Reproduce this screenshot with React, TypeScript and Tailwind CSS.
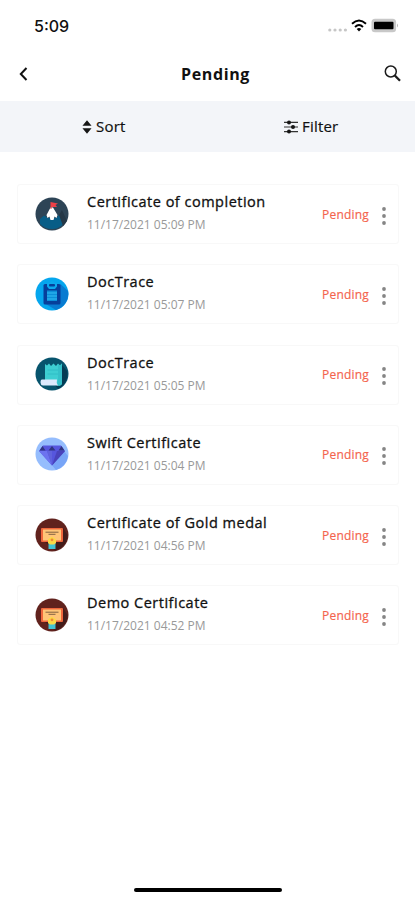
import React from 'react';

type BadgeKind = 'summit' | 'clipboard' | 'scroll' | 'diamond' | 'diploma';

interface Certificate {
  id: number;
  title: string;
  date: string;
  badge: BadgeKind;
}

const CERTIFICATES: Certificate[] = [
  { id: 1, title: 'Certificate of completion', date: '11/17/2021 05:09 PM', badge: 'summit' },
  { id: 2, title: 'DocTrace', date: '11/17/2021 05:07 PM', badge: 'clipboard' },
  { id: 3, title: 'DocTrace', date: '11/17/2021 05:05 PM', badge: 'scroll' },
  { id: 4, title: 'Swift Certificate', date: '11/17/2021 05:04 PM', badge: 'diamond' },
  { id: 5, title: 'Certificate of Gold medal', date: '11/17/2021 04:56 PM', badge: 'diploma' },
  { id: 6, title: 'Demo Certificate', date: '11/17/2021 04:52 PM', badge: 'diploma' },
];

const Badge: React.FC<{ kind: BadgeKind }> = ({ kind }) => (
  <svg width="34" height="34" viewBox="0 0 34 34" className="shrink-0 -mt-px">
    {kind === 'summit' && (
      <>
        <circle cx="17" cy="17" r="16.5" fill="#2d4456" />
        <path d="M5 27L5 22L9 18.5L13 21H21L24 18L30 25A16 16 0 0 1 5 27Z" fill="#075d87" />
        <path d="M11.5 18L15.5 10.5H18L22.5 18L21.5 21L19.5 19.5L18.5 23H15.5L14.5 19.5L12.5 21Z" fill="#fff" />
        <path d="M24 18L27 13L32 24L28 29Z" fill="#243746" />
        <path d="M15.5 5L23 6.5L20.5 8L22 10H16.5V12H15.5Z" fill="#ef4047" />
      </>
    )}
    {kind === 'clipboard' && (
      <>
        <circle cx="17" cy="17" r="16.5" fill="#05a6ee" />
        <path d="M25.5 7L33 14A16.5 16.5 0 0 1 21 33L9 26Z" fill="#087bd1" />
        <rect x="8.5" y="7" width="17" height="20.5" rx="1.5" fill="#063f9b" />
        <path d="M12 6H14.5L15.5 4.5H18.5L19.5 6H22V9.5L20 12H14L12 9.5Z" fill="#0ca9ed" />
        <rect x="14" y="7" width="6" height="2.5" rx="1" fill="#063f9b" />
        <rect x="12" y="13.5" width="10" height="10.5" fill="#0b8fd9" />
        <path d="M12 16H22M12 19H22M12 22H22" stroke="#34bdf4" strokeWidth="1.1" />
      </>
    )}
    {kind === 'scroll' && (
      <>
        <circle cx="17" cy="17" r="16.5" fill="#07546d" />
        <path d="M27 8L32 14A16 16 0 0 1 23 32L19 27Z" fill="#043c54" />
        <path d="M10 7L12 8.5L14 6.5L16 9L18.5 6.5L21 9L23 6.5L25 8.5L27 6.5V27Q25 30 21 28H10Z" fill="#3dced2" />
        <path d="M23 8L25 8.5L27 6.5V27Q25 30 22 28L23 23Z" fill="#34c0c9" />
        <path d="M12.5 13H23M12.5 17H23" stroke="#2fbac3" strokeWidth=".8" />
        <path d="M7 22.5H22Q21 26 23 28.5H8Q5.5 28 5.5 25.5Q5.5 22.5 7 22.5Z" fill="#dceafd" />
      </>
    )}
    {kind === 'diamond' && (
      <>
        <circle cx="17" cy="17" r="16.5" fill="#95bdfd" />
        <path d="M29 14L33 19A16.5 16.5 0 0 1 21 33L16 27Z" fill="#78a5f7" />
        <path d="M8 8.5H26L30 14L17 28.5L4 14Z" fill="#5656dd" />
        <path d="M4 14H12L17 28.5Z" fill="#6c73ef" />
        <path d="M22 14H30L17 28.5Z" fill="#4943bb" />
        <path d="M12 14H17V28.5Z" fill="#6063dd" />
        <path d="M4.5 13.5L7.5 9L10.5 13.5ZM13.5 13.5L17 9L20.5 13.5ZM23.5 13.5L26.5 9L29.5 13.5Z" fill="#313681" />
      </>
    )}
    {kind === 'diploma' && (
      <>
        <circle cx="17" cy="17" r="16.5" fill="#61221d" />
        <path d="M28 10L32.5 17A16 16 0 0 1 20 32.5L10 24Z" fill="#431c1b" />
        <rect x="6" y="10" width="22" height="14" rx="1" fill="#ef663c" />
        <rect x="8" y="11.5" width="18" height="11" fill="#ffc578" />
        <path d="M10.5 14.2H23.5M13.5 16.3H20.5" stroke="#74563b" strokeWidth=".9" />
        <path d="M13.5 25H20.5V31H13.5Z" fill="#43c3d2" />
        <path d="M17 18.5L21 21.5V25L19 26.5H15L13 25V21.5Z" fill="#fbd846" />
        <circle cx="17" cy="21.8" r="1.4" fill="#ee8738" />
      </>
    )}
  </svg>
);

const StatusBar = () => (
  <div className="h-[50px] pt-px pl-[34px] pr-[16px] flex items-center justify-between">
    <span className="font-['Inter',sans-serif] text-[16px] font-medium leading-none">5:09</span>
    <div className="flex items-center">
      <svg width="20" height="14" viewBox="0 0 20 14" fill="#c6c6c6">
        <circle cx="1.8" cy="11" r="1.6" />
        <circle cx="7" cy="11" r="1.6" />
        <circle cx="12.2" cy="11" r="1.6" />
        <circle cx="17.4" cy="11" r="1.6" />
      </svg>
      <svg className="ml-[3px] -mt-px" width="16" height="13" viewBox="0 0 16 13" fill="none" stroke="#000" strokeWidth="1.9">
        <path d="M1 4.8Q8-1.8 15 4.8M4 8Q8 4.2 12 8" />
        <path d="M5.7 10Q8 8.2 10.3 10L8 12.4Z" fill="#000" stroke="none" />
      </svg>
      <svg className="ml-1 -mt-px" width="28" height="15" viewBox="0 0 28 15">
        <rect x=".5" y=".7" width="24.6" height="13.6" rx="3.5" fill="#c8c8c8" />
        <rect x="3" y="3.7" width="19.5" height="7.6" rx="1" fill="#000" />
        <path d="M26 5.5Q28 7.5 26 9.5Z" fill="#b5b5b5" />
      </svg>
    </div>
  </div>
);

const Header = () => (
  <header className="h-[51px] pl-[19px] pr-[14px] grid grid-cols-[1fr_auto_1fr] items-center">
    <button aria-label="Back" className="-mt-[4px] justify-self-start">
      <svg width="9" height="14" viewBox="0 0 9 14" fill="none" stroke="#111" strokeWidth="2">
        <path d="M7.5 1L1.8 7L7.5 13" />
      </svg>
    </button>
    <h1 className="ml-[11px] text-[16px] font-bold leading-none -mt-[4px] tracking-[0.6px]">Pending</h1>
    <button aria-label="Search" className="-mt-[4px] justify-self-end">
      <svg width="17" height="17" viewBox="0 0 17 17" fill="none" stroke="#1b1b1b">
        <circle cx="6.8" cy="6.5" r="5.5" strokeWidth="1.5" />
        <path d="M10.8 10.5L16 15.7" strokeWidth="2.3" />
      </svg>
    </button>
  </header>
);

const Toolbar = () => (
  <div className="h-[51px] bg-[#f3f5f9] grid grid-cols-2">
    <button className="flex items-center justify-center gap-1 text-[15px]">
      <svg width="10" height="14" viewBox="0 0 11 14" preserveAspectRatio="none" fill="#161616">
        <path d="M5.5 .3L10.5 5.8H.5ZM.5 8.2H10.5L5.5 13.7Z" />
      </svg>
      <span className="tracking-[0.2px] [-webkit-text-stroke:0.2px]">Sort</span>
    </button>
    <button className="flex items-center justify-center gap-1 text-[15px]">
      <svg width="14" height="14" viewBox="0 0 14 14" fill="#151515">
        <path d="M0 2.4H14M0 7H14M0 11.6H14" stroke="#333" strokeWidth="1.1" />
        <circle cx="5" cy="2.4" r="2" />
        <circle cx="9" cy="7" r="2" />
        <circle cx="5" cy="11.6" r="2" />
      </svg>
      <span className="tracking-[0.2px] [-webkit-text-stroke:0.2px]">Filter</span>
    </button>
  </div>
);

const CertificateCard: React.FC<{ item: Certificate }> = ({ item }) => (
  <li className="h-[60px] flex items-center rounded-[3px] border border-[#f8f8f8] bg-white pl-[17px] pr-[11px]">
    <Badge kind={item.badge} />
    <div className="ml-[18px] -mt-px flex-1">
      <h2 className="text-[14.5px] leading-[20px] tracking-[0.5px] text-[#111] whitespace-nowrap [-webkit-text-stroke:0.3px]">{item.title}</h2>
      <p className="mt-[3px] text-[12px] leading-[20px] text-[#999]">{item.date}</p>
    </div>
    <span className="mt-px text-[12px] leading-none tracking-[0.2px] text-[#f4634d] [-webkit-text-stroke:0.15px]">Pending</span>
    <button aria-label="More options" className="ml-[12px] mt-[3px]">
      <svg width="6" height="20" viewBox="0 0 6 20" fill="#858585">
        <circle cx="3" cy="3" r="1.9" />
        <circle cx="3" cy="10" r="1.9" />
        <circle cx="3" cy="17" r="1.9" />
      </svg>
    </button>
  </li>
);

export default function App() {
  return (
    <div className="h-[900px] w-full overflow-hidden bg-white text-[#111] flex flex-col font-['Open_Sans','Noto_Sans',sans-serif]">
      <StatusBar />
      <Header />
      <Toolbar />
      <ul className="mt-8 ml-[17px] mr-[16px] flex-1 flex flex-col gap-[20.3px]">
        {CERTIFICATES.map((item) => (
          <CertificateCard key={item.id} item={item} />
        ))}
      </ul>
      <div className="mb-[8px] h-[4px] w-[148px] shrink-0 self-center rounded-full bg-black" />
    </div>
  );
}
